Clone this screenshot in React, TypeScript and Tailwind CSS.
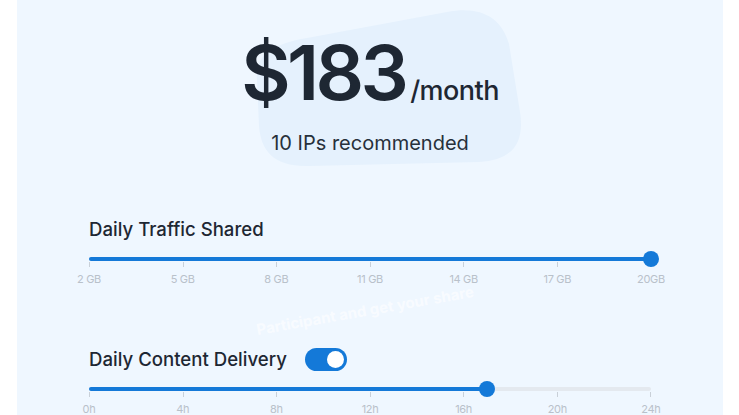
import React from "react";

const gbLabels = ["2 GB", "5 GB", "8 GB", "11 GB", "14 GB", "17 GB", "20GB"];
const hourLabels = ["0h", "4h", "8h", "12h", "16h", "20h", "24h"];

function Slider({ percent, labels }: { percent: number; labels: string[] }) {
  return (
    <div className="flex flex-col">
      <div className="relative h-4">
        <div className="absolute left-0 right-0 top-[6px] h-[4px] rounded-full bg-[#e4e9ef]" />
        <div
          className="absolute left-0 top-[6px] h-[4px] rounded-full bg-[#1479d8]"
          style={{ width: `${percent}%` }}
        />
        <div
          className="absolute top-0 h-4 w-4 -translate-x-1/2 rounded-full bg-[#1479d8]"
          style={{ left: `${percent}%` }}
        />
      </div>
      <div className="-mt-[5px] flex h-[5px] justify-between">
        {labels.map((l) => (
          <span key={l} className="w-px bg-[#c9d0d8]" />
        ))}
      </div>
      <div className="mt-[5px] flex justify-between">
        {labels.map((l) => (
          <span key={l} className="flex w-0 justify-center">
            <span className="whitespace-nowrap text-[11px] leading-[14px] tracking-[-0.03em] text-[#b9c1ca]">
              {l}
            </span>
          </span>
        ))}
      </div>
    </div>
  );
}

export default function App() {
  return (
    <div
      className="h-[415px] w-[739px] overflow-hidden bg-white"
      style={{ fontFamily: "Inter, 'Noto Sans', sans-serif" }}
    >
      <div className="relative ml-[17px] flex h-[415px] w-[706px] flex-col bg-[#eff7ff]">
        {/* soft blob behind the price */}
        <svg
          className="absolute left-[223px] top-0"
          width="290"
          height="175"
          viewBox="223 0 290 175"
        >
          <path
            d="M240 80 C238 55 255 44 290 38 L430 12 C462 6 484 16 492 44 L503 112 C508 145 494 160 462 162 L292 166 C258 167 244 152 242 126 Z"
            fill="#e5f1fd"
          />
        </svg>

        <div className="relative flex flex-col items-center pt-[34px]">
          <div className="flex h-[76px] items-baseline">
            <span className="text-[76px] font-semibold leading-[76px] tracking-[-0.048em] text-[#1e2733]">
              $183
            </span>
            <span className="ml-[5px] text-[27px] font-medium leading-none tracking-[-0.02em] text-[#1e2733]">
              /month
            </span>
          </div>
          <p className="mt-[19px] text-[20px] leading-[28px] text-[#27303b]">10 IPs recommended</p>
        </div>

        <div className="relative flex flex-col px-[72px]">
          <h2 className="mt-[60px] text-[18.6px] font-medium leading-[24px] text-[#1e2733]">
            Daily Traffic Shared
          </h2>
          <div className="mt-[10px]">
            <Slider percent={100} labels={gbLabels} />
          </div>

          <div className="mt-[61px] flex items-center gap-[18px]">
            <h2 className="text-[18.6px] font-medium leading-[24px] text-[#1e2733]">
              Daily Content Delivery
            </h2>
            <span className="flex h-[23px] w-[42px] items-center justify-end rounded-full bg-[#1479d8] px-[3px]">
              <span className="h-[17px] w-[17px] rounded-full bg-white" />
            </span>
          </div>
          <div className="mt-[10px]">
            <Slider percent={(17 / 24) * 100} labels={hourLabels} />
          </div>
        </div>

        {/* faint watermark */}
        <span className="pointer-events-none absolute left-[238px] top-[300px] -rotate-[10deg] whitespace-nowrap text-[15px] font-bold text-white opacity-60">
          Participant and get your share
        </span>
      </div>
    </div>
  );
}
